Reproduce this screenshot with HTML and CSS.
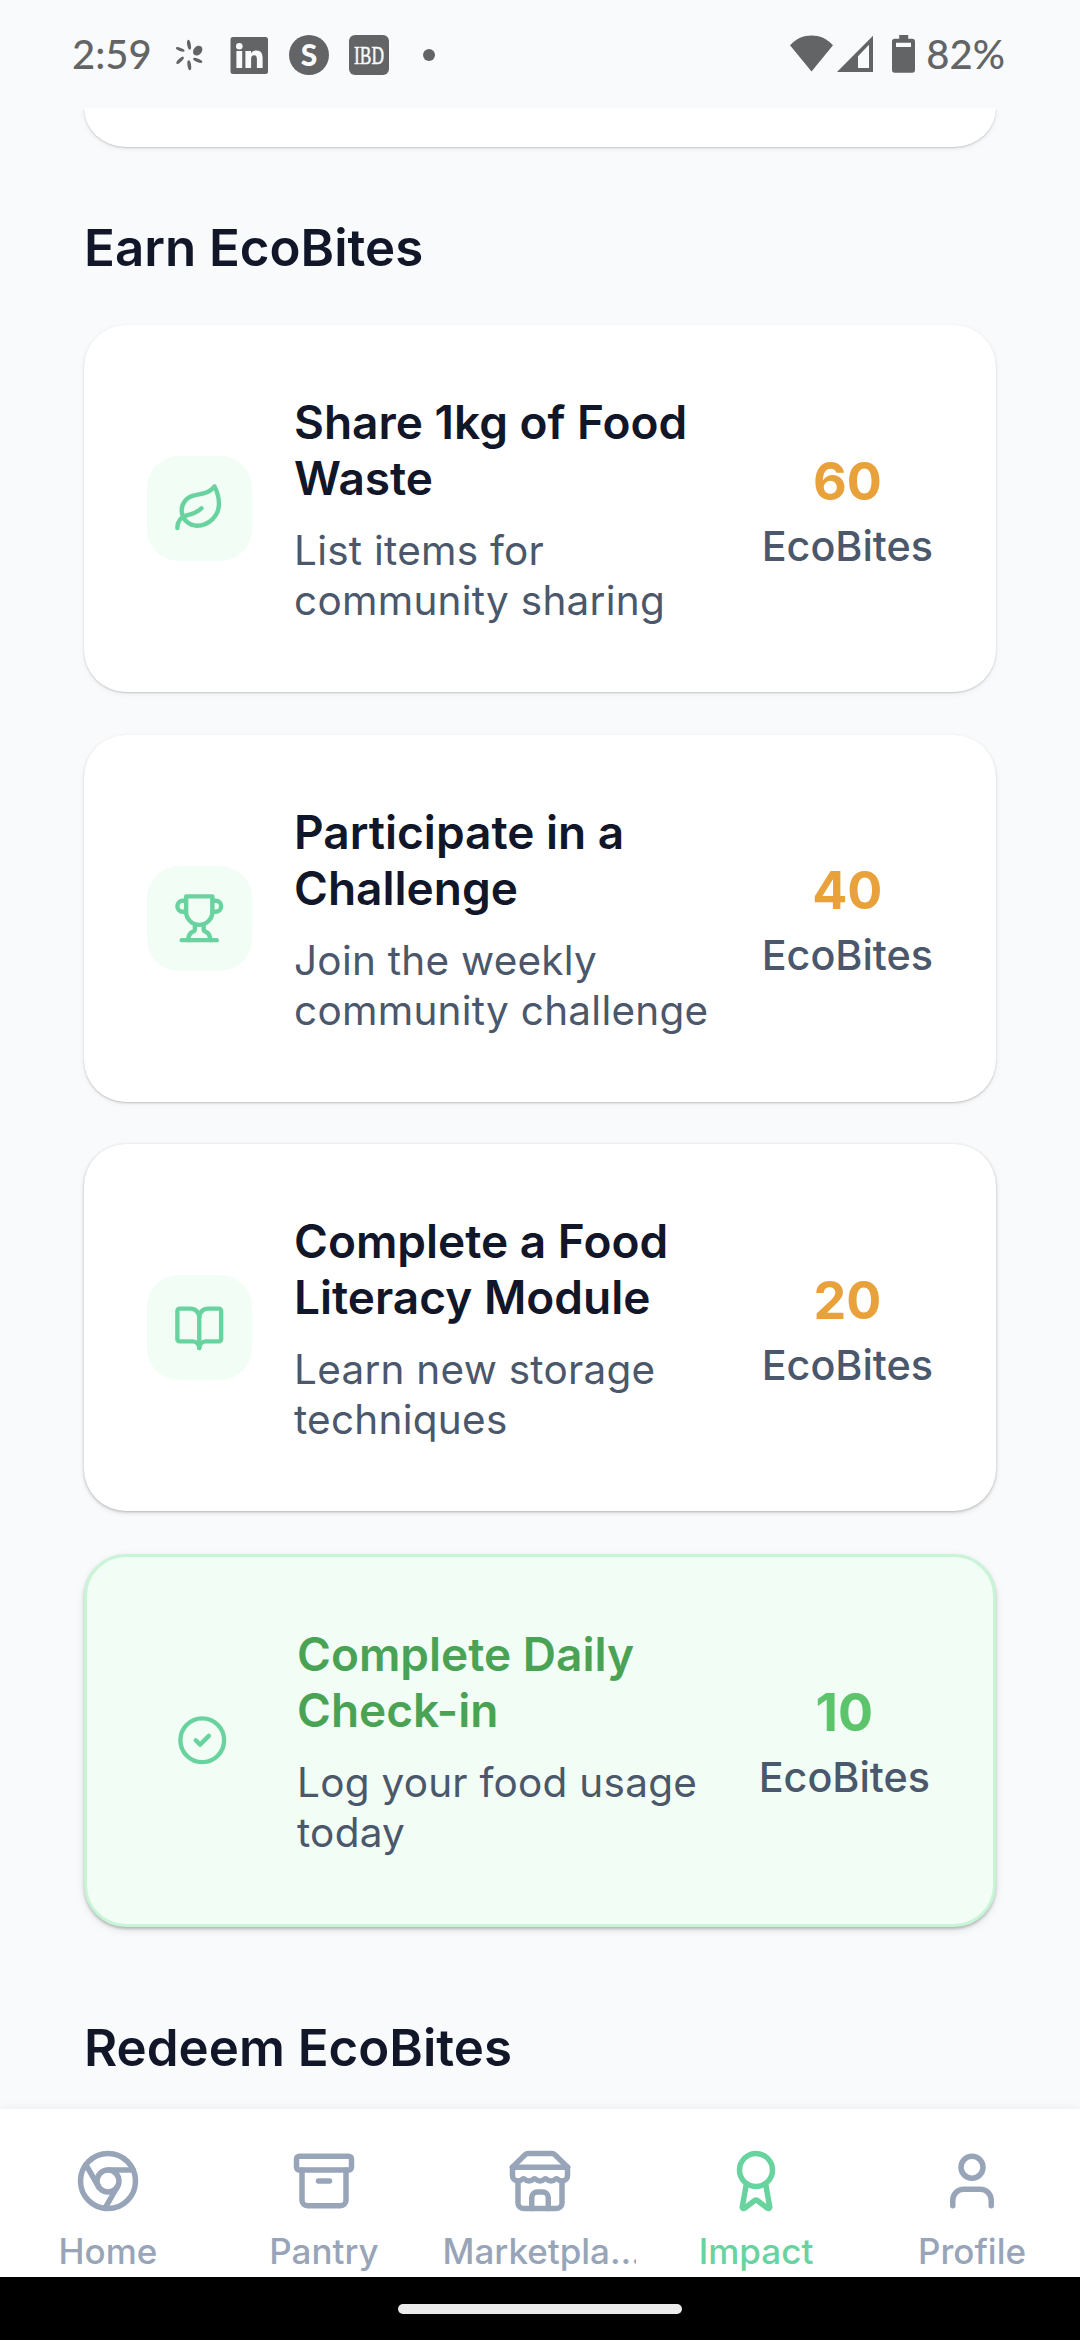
FILE: index.html
```html
<!DOCTYPE html>
<html lang="en">
<head>
<meta charset="utf-8">
<title>EcoBites</title>
<link rel="stylesheet" href="styles.css">
</head>
<body>
<div class="screen">
  <header class="status">
    <span class="status-text">2:59</span>
    <div class="notifications">
      <svg width="40" height="40" viewBox="0 0 40 40">
        <ellipse cx="20" cy="9.8" rx="1.8" ry="5" transform="rotate(-10 20 9.8)"/>
        <ellipse cx="28.7" cy="15.6" rx="4.1" ry="5.4" transform="rotate(40 28.7 15.6)"/>
        <ellipse cx="28.7" cy="25.4" rx="4.9" ry="1.7" transform="rotate(22 28.7 25.4)"/>
        <ellipse cx="20.3" cy="30.3" rx="1.8" ry="5" transform="rotate(-8 20.3 30.3)"/>
        <ellipse cx="11.1" cy="25.3" rx="4.9" ry="1.7" transform="rotate(-44 11.1 25.3)"/>
        <ellipse cx="11.2" cy="14.4" rx="4.6" ry="1.6" transform="rotate(20 11.2 14.4)"/>
      </svg>
      <svg width="40" height="40" viewBox="0 0 40 40">
        <rect x="1.5" y="2" width="37.5" height="37" rx="2.5"/>
        <circle class="cut" cx="10.3" cy="11.3" r="3.3"/>
        <rect class="cut" x="7.4" y="16" width="5.8" height="17"/>
        <path class="cut" d="M16.4 16H22v2.4c1-1.7 3-2.8 5.3-2.8 4.8 0 6.3 3 6.3 7.500V33h-5.700v-8.900c0-2.100-.4-3.900-2.700-3.900s-3.100 1.700-3.100 3.900V33h-5.700z"/>
      </svg>
      <svg width="40" height="40" viewBox="0 0 40 40">
        <circle cx="20" cy="20" r="20"/>
        <text class="cut glyph-s" x="20" y="31" text-anchor="middle">S</text>
      </svg>
      <svg width="40" height="40" viewBox="0 0 40 40">
        <rect width="40" height="40" rx="6"/>
        <text class="cut glyph-ibd" x="5" y="28.500" textLength="30" lengthAdjust="spacingAndGlyphs">IBD</text>
      </svg>
      <svg width="40" height="40" viewBox="0 0 40 40"><circle cx="20" cy="20" r="6"/></svg>
    </div>
    <div class="system">
      <svg class="wifi" width="43" height="40" viewBox="0 0 43 40"><path d="M0 10.300C6 3.400 13.500.4 21.500.4S37 3.400 43 10.300L21.500 36.500z"/></svg>
      <svg class="signal" width="36" height="40" viewBox="0 0 36 40"><path fill-rule="evenodd" d="M0 37 36 .8V37zM21 21.200V33h11V9.800z"/></svg>
      <svg class="battery" width="23" height="40" viewBox="0 0 23 40"><path fill-rule="evenodd" d="M7.200 0h9v3.800h4a2.800 2.800 0 0 1 2.800 2.800V35a2.800 2.800 0 0 1-2.800 2.800H2.800A2.800 2.800 0 0 1 0 35V6.600a2.800 2.800 0 0 1 2.800-2.800h4.400zM4 7.800V12h15V7.800z"/></svg>
      <span class="status-text">82%</span>
    </div>
  </header>

  <main class="content">
    <section class="card card-cut"></section>
    <h2 class="heading">Earn EcoBites</h2>
    <div class="list">
      <article class="card task">
        <div class="badge"><svg class="icon" viewBox="0 0 24 24"><path d="M11 20A7 7 0 0 1 9.800 6.100C15.500 5 17 4.480 19 2c1 2 2 4.180 2 8 0 5.500-4.780 10-10 10Z"/><path d="M2 21c0-3 1.850-5.360 5.080-6C9.500 14.520 12 13 13 12"/></svg></div>
        <div class="info"><h3 class="title">Share 1kg of Food<br>Waste</h3><p class="desc">List items for<br>community sharing</p></div>
        <div class="reward"><span class="amount">60</span><span class="unit">EcoBites</span></div>
      </article>
      <article class="card task task-2">
        <div class="badge"><svg class="icon" viewBox="0 0 24 24"><path d="M6 9H4.500a2.500 2.500 0 0 1 0-5H6"/><path d="M18 9h1.500a2.500 2.500 0 0 0 0-5H18"/><path d="M4 22h16"/><path d="M10 14.660V17c0 .55-.47.98-.97 1.210C7.850 18.750 7 20.240 7 22"/><path d="M14 14.660V17c0 .55.47.98.97 1.210C16.150 18.750 17 20.240 17 22"/><path d="M18 2H6v7a6 6 0 0 0 12 0V2Z"/></svg></div>
        <div class="info"><h3 class="title">Participate in a<br>Challenge</h3><p class="desc">Join the weekly<br>community challenge</p></div>
        <div class="reward"><span class="amount">40</span><span class="unit">EcoBites</span></div>
      </article>
      <article class="card task task-3">
        <div class="badge"><svg class="icon" viewBox="0 0 24 24"><path d="M12 7v14"/><path d="M3 18a1 1 0 0 1-1-1V4a1 1 0 0 1 1-1h5a4 4 0 0 1 4 4 4 4 0 0 1 4-4h5a1 1 0 0 1 1 1v13a1 1 0 0 1-1 1h-6a3 3 0 0 0-3 3 3 3 0 0 0-3-3z"/></svg></div>
        <div class="info"><h3 class="title">Complete a Food<br>Literacy Module</h3><p class="desc">Learn new storage<br>techniques</p></div>
        <div class="reward"><span class="amount">20</span><span class="unit">EcoBites</span></div>
      </article>
      <article class="card task task-done">
        <div class="badge"><svg class="icon" viewBox="0 0 24 24"><circle cx="12" cy="12" r="10"/><path d="m9 12 2 2 4-4"/></svg></div>
        <div class="info"><h3 class="title">Complete Daily<br>Check-in</h3><p class="desc">Log your food usage<br>today</p></div>
        <div class="reward"><span class="amount">10</span><span class="unit">EcoBites</span></div>
      </article>
    </div>
    <h2 class="heading heading-next">Redeem EcoBites</h2>
  </main>

  <nav class="tabs">
    <a class="tab"><svg class="icon" viewBox="0 0 24 24"><circle cx="12" cy="12" r="10"/><circle cx="12" cy="12" r="4"/><path d="M21.170 8H12"/><path d="M3.950 6.060 8.540 14"/><path d="M10.880 21.940 15.460 14"/></svg><span class="label">Home</span></a>
    <a class="tab"><svg class="icon" viewBox="0 0 24 24"><rect x="2" y="3" width="20" height="5" rx="1"/><path d="M4 8v11a2 2 0 0 0 2 2h12a2 2 0 0 0 2-2V8"/><path d="M10 12h4"/></svg><span class="label">Pantry</span></a>
    <a class="tab"><svg class="icon" viewBox="0 0 24 24"><path d="m2 7 4.410-4.410A2 2 0 0 1 7.830 2h8.340a2 2 0 0 1 1.420.59L22 7"/><path d="M4 12v8a2 2 0 0 0 2 2h12a2 2 0 0 0 2-2v-8"/><path d="M15 22v-4a2 2 0 0 0-2-2h-2a2 2 0 0 0-2 2v4"/><path d="M2 7h20"/><path d="M22 7v3a2 2 0 0 1-2 2a2.700 2.700 0 0 1-1.590-.63.7.7 0 0 0-.82 0A2.700 2.700 0 0 1 16 12a2.700 2.700 0 0 1-1.590-.63.7.7 0 0 0-.82 0A2.700 2.700 0 0 1 12 12a2.700 2.700 0 0 1-1.590-.63.7.7 0 0 0-.82 0A2.700 2.700 0 0 1 8 12a2.700 2.700 0 0 1-1.590-.63.7.7 0 0 0-.82 0A2.700 2.700 0 0 1 4 12a2 2 0 0 1-2-2V7"/></svg><span class="label label-clip">Marketpla…</span></a>
    <a class="tab tab-active"><svg class="icon" viewBox="0 0 24 24"><path d="m15.477 12.890 1.515 8.526a.5.5 0 0 1-.81.47l-3.580-2.687a1 1 0 0 0-1.197 0l-3.586 2.686a.5.5 0 0 1-.81-.469l1.514-8.526"/><circle cx="12" cy="8" r="6"/></svg><span class="label">Impact</span></a>
    <a class="tab"><svg class="icon" viewBox="0 0 24 24"><path d="M19 21v-2a4 4 0 0 0-4-4H9a4 4 0 0 0-4 4v2"/><circle cx="12" cy="7" r="4"/></svg><span class="label">Profile</span></a>
  </nav>
  <footer class="gesture"><span class="pill"></span></footer>
</div>
</body>
</html>
```
FILE: styles.css
```css
* { box-sizing: border-box; }

body {
  margin: 0;
  background: #f9fafc;
  font-family: Inter, "Liberation Sans", sans-serif;
}

.screen {
  display: flex;
  flex-direction: column;
  width: 1080px;
  height: 2340px;
  overflow: hidden;
  background: #f9fafc;
}

/* Status bar */
.status {
  flex: none;
  display: flex;
  height: 108px;
  padding: 35px 75px 0 72px;
  color: #636466;
  fill: #636466;
}
.status-text {
  font-family: Lato, sans-serif;
  font-weight: 500;
  font-size: 40px;
  line-height: 39px;
}
.status svg { display: block; }
.notifications { display: flex; gap: 20px; margin-left: 17px; }
.system { display: flex; margin-left: auto; }
.signal { margin-left: 4px; }
.battery { margin: 0 11px 0 19px; }
.cut { fill: #f9fafc; }
.glyph-s { font: 900 30px Lato, sans-serif; }
.glyph-ibd { font: 400 25px "Liberation Serif", serif; stroke: #f9fafc; stroke-width: .5px; }

/* Scrolling area */
.content {
  flex: none;
  height: 2001px;
  padding: 0 84px;
  overflow: hidden;
}
.card {
  border-radius: 42px;
  background: #fff;
  box-shadow: 0 1px 2px rgba(0, 0, 0, .18), 0 2px 6px rgba(0, 0, 0, .05);
}
.card-cut {
  height: 39px;
  border-radius: 0 0 42px 42px / 0 0 39px 39px;
}
.heading {
  margin: 69.5px 0 46.7px;
  color: #111629;
  font-size: 51px;
  font-weight: 600;
  line-height: 62px;
}
.heading-next { margin: 90px 0 0; }

.list { display: flex; flex-direction: column; gap: 42.6px; }
.task {
  display: flex;
  align-items: center;
  gap: 42px;
  height: 367px;
  padding: 0 63px;
}
.badge {
  flex: none;
  display: flex;
  align-items: center;
  justify-content: center;
  width: 105px;
  height: 105px;
  border-radius: 32px;
  background: #f1fdf5;
}
.icon {
  display: block;
  fill: none;
  stroke: currentColor;
  stroke-width: 2;
  stroke-linecap: round;
  stroke-linejoin: round;
}
.badge .icon { width: 52.5px; height: 52.5px; color: #69d3a0; }
.info { flex: 1; padding-top: 3px; white-space: nowrap; }
.title {
  margin: 0 0 20px;
  color: #111629;
  font-size: 46px;
  font-weight: 600;
  line-height: 56px;
}
.desc {
  margin: 0;
  color: #4b576a;
  font-size: 40.5px;
  letter-spacing: .25px;
  line-height: 50px;
}
.reward {
  display: flex;
  flex-direction: column;
  align-items: center;
  gap: 8px;
  padding-top: 4px;
}
.amount { color: #e9a23b; font-size: 52px; font-weight: 700; line-height: 62px; }
.unit {
  color: #4b576a;
  font-size: 41.3px;
  font-weight: 500;
  line-height: 50px;
}

.task-2 { box-shadow: 0 1px 2px rgba(0, 0, 0, .2), 0 2px 6px rgba(0, 0, 0, .06); }
.task-3 { box-shadow: 0 1px 3px rgba(0, 0, 0, .24), 0 2px 6px rgba(0, 0, 0, .08); }
.task-done {
  height: 373px;
  border: 3px solid #c7f5d6;
  background: #f1fdf5;
  box-shadow: 0 2px 3px rgba(0, 0, 0, .22), 0 3px 8px rgba(0, 0, 0, .1);
}
.task-done .title { color: #4aa355; }
.task-done .amount { color: #5cc46a; }

/* Bottom navigation */
.tabs {
  flex: none;
  display: flex;
  height: 168px;
  padding-top: 39px;
  background: #fff;
  box-shadow: 0 -1px 10px rgba(0, 0, 0, .05);
  position: relative;
}
.tab {
  flex: 1 1 0;
  display: flex;
  flex-direction: column;
  align-items: center;
  gap: 16px;
  color: #98a5b9;
}
.tab-active { color: #69d39f; }
.tab .icon { width: 66px; height: 66px; }
.label { font-size: 35px; font-weight: 500; line-height: 42px; white-space: nowrap; }
.label-clip { width: 193px; margin-right: 2px; overflow: hidden; }

.gesture {
  flex: 1;
  display: flex;
  justify-content: center;
  padding-top: 27px;
  background: #000;
}
.pill { width: 284px; height: 10px; border-radius: 5px; background: #ebebeb; }
```
